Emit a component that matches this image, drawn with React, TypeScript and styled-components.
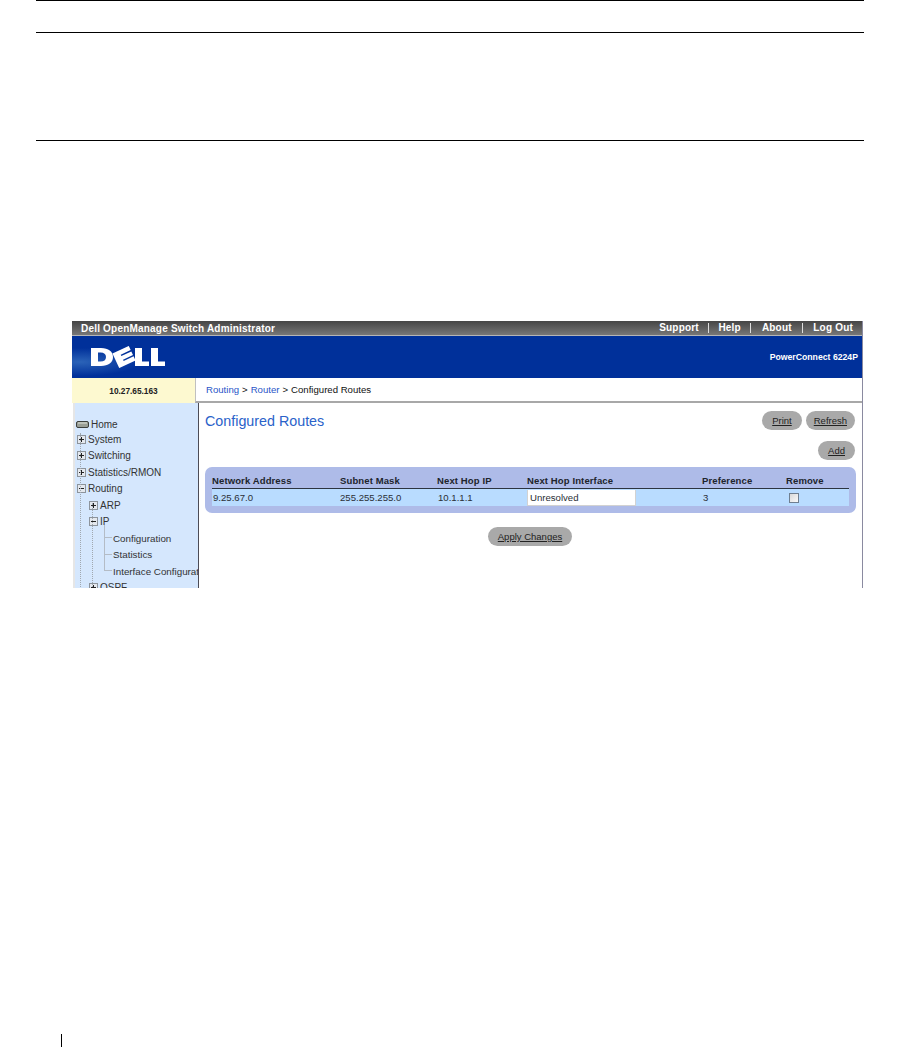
import React from "react";
import styled, { createGlobalStyle } from "styled-components";

const Global = createGlobalStyle`
html, body { margin: 0; padding: 0; background: #fff; }
body { font-family: "Liberation Sans", Arial, sans-serif; color: #222; }
`;

const Page = styled.div`
width: 900px;
height: 1048px;
overflow: hidden;
display: flex;
flex-direction: column;
`;
const Rule = styled.div<{ $gap: number }>`
height: 1px;
margin: ${(p) => p.$gap}px 36px 0;
background: #000;
`;
const Frame = styled.div`
width: 791px;
height: 267px;
margin: 180px 0 0 72px;
overflow: hidden;
flex: none;
box-sizing: border-box;
border-right: 1.5px solid #8a8aa0;
display: flex;
flex-direction: column;
`;
const TopBar = styled.div`
height: 14px;
flex: none;
display: flex;
align-items: center;
justify-content: space-between;
padding: 0 9px 0 9px;
background: linear-gradient(#454545, #777);
border-bottom: 1px solid #b5b5b5;
color: #fff;
font-size: 10px;
font-weight: bold;
letter-spacing: 0.2px;
`;
const TopLinks = styled.div`
display: flex;
align-items: center;
height: 100%;
`;
const TopLink = styled.span<{ $pad: number; $last?: boolean }>`
padding: 0 ${(p) => (p.$last ? 0 : p.$pad)}px 0 ${(p) => p.$pad}px;
line-height: 10px;
border-right: ${(p) => (p.$last ? "none" : "1px solid #ddd")};
`;
const Banner = styled.div`
height: 42px;
flex: none;
display: flex;
align-items: center;
justify-content: space-between;
padding: 0 4px 0 19px;
background:
  radial-gradient(ellipse 60px 14px at 8px 26px, #2b63b8 0%, rgba(43, 99, 184, 0) 100%),
  #00309a;
`;
const Model = styled.span`
color: #fff;
font-size: 8.7px;
font-weight: bold;
`;
const AddressRow = styled.div`
height: 25px;
flex: none;
display: flex;
`;
const Address = styled.div`
width: 123px;
display: flex;
align-items: center;
justify-content: center;
background: #fdf9d0;
font-size: 8.3px;
font-weight: bold;
color: #222;
`;
const Crumbs = styled.div`
flex: 1;
display: flex;
align-items: center;
gap: 3px;
padding-left: 10px;
border-left: 1px solid #c0c0c0;
border-bottom: 2px solid #a8a8a8;
font-size: 9.6px;
color: #111;
`;
const Crumb = styled.span`
color: #2a55c8;
`;
const Body = styled.div`
flex: 1;
display: flex;
min-height: 0;
`;
const Sidebar = styled.div`
position: relative;
width: 126px;
flex: none;
box-sizing: border-box;
margin-left: 1px;
padding-top: 14px;
background: #d5e7fd;
border-left: 2px solid #e6e6e6;
border-right: 1.5px solid #4c4c56;
overflow: hidden;
font-size: 10px;
color: #333;
`;
const TreeRow = styled.div<{ $level: number }>`
height: 16.5px;
display: flex;
align-items: center;
gap: 2px;
white-space: nowrap;
padding-left: ${(p) => 2 + p.$level * 12}px;
`;
const TopRow = styled(TreeRow)`
height: 14px;
padding-left: 1px;
`;
const Leaf = styled(TreeRow)`
padding-left: 38px;
font-size: 9.8px;
`;
const Guide = styled.div<{ $x: number; $y: number; $h: number; $solid?: boolean }>`
position: absolute;
left: ${(p) => p.$x}px;
top: ${(p) => p.$y}px;
height: ${(p) => p.$h}px;
border-left: 1px ${(p) => (p.$solid ? "solid #b4bcc6" : "dotted #a0a8b0")};
`;
const Tick = styled.div<{ $x: number; $y: number }>`
position: absolute;
left: ${(p) => p.$x}px;
top: ${(p) => p.$y}px;
width: 8px;
border-top: 1px solid #b4bcc6;
`;
const Main = styled.div`
flex: 1;
padding: 8px 7px 0 6px;
display: flex;
flex-direction: column;
`;
const TitleRow = styled.div`
display: flex;
justify-content: space-between;
align-items: center;
height: 19px;
`;
const Title = styled.h1`
margin: 0;
font-size: 14.3px;
font-weight: normal;
color: #2a62c9;
`;
const Buttons = styled.div<{ $center?: boolean }>`
display: flex;
gap: 4px;
justify-content: ${(p) => (p.$center ? "center" : "flex-end")};
`;
const Pill = styled.span<{ $pad?: number }>`
height: 19px;
padding: 0 ${(p) => p.$pad ?? 10}px;
display: flex;
align-items: center;
border-radius: 10px;
background: #a9a9a9;
color: #222;
font-size: 9.5px;
text-decoration: underline;
`;
const AddRow = styled(Buttons)`
margin-top: 11px;
`;
const ApplyRow = styled(Buttons)`
margin-top: 14px;
`;
const Panel = styled.div`
margin-top: 7px;
height: 46px;
box-sizing: border-box;
padding: 7px 7px 0;
border-radius: 7px;
background: #aebbe8;
margin-right: -1px;
`;
const Grid = "128px 97px 90px 175px 84px 1fr";
const HeadRow = styled.div`
display: grid;
grid-template-columns: ${Grid};
height: 15px;
box-sizing: border-box;
padding-bottom: 1px;
align-items: center;
border-bottom: 1px solid #2d3440;
font-size: 9.5px;
font-weight: bold;
letter-spacing: 0.12px;
color: #20242c;
`;
const DataRow = styled.div`
display: grid;
grid-template-columns: ${Grid};
height: 17px;
align-items: center;
background: #b9dcff;
font-size: 9.6px;
color: #2b2f36;
`;
const Cell = styled.span<{ $flush?: boolean }>`
padding-left: ${(p) => (p.$flush ? 0 : 1)}px;
`;
const Interface = styled.div`
width: 109px;
height: 16px;
box-sizing: border-box;
padding-left: 2px;
display: flex;
align-items: center;
background: #fff;
border: 1px solid #d2d2d2;
border-width: 0 1px 1px 1px;
`;
const Check = styled.div`
width: 10px;
height: 10px;
margin-left: 3px;
box-sizing: border-box;
border: 1px solid #6f7f90;
background: linear-gradient(135deg, #d9d9d9, #fafafa);
`;
const Foot = styled.div`
width: 1px;
height: 13px;
flex: none;
margin: 446px 0 0 61px;
background: #000;
`;

function Logo() {
  return (
    <svg width="74" height="22" viewBox="0 0 74 22" fill="#fff">
      <path
        fillRule="evenodd"
        d="M0 2H10C17.5 2 22 5.5 22 11S17.5 20 10 20H0ZM7 6.5V15.5H9.5C13 15.5 15 14 15 11S13 6.5 9.5 6.5Z"
      />
      <path
        transform="rotate(-25 33 11)"
        d="M24 3H42V7.5H31V9H42V13H31V14.5H42V19H24Z"
      />
      <path d="M44 2H51V15.5H58V20H44Z" />
      <path d="M60 2H67V15.5H74V20H60Z" />
    </svg>
  );
}

function Toggle({ open }: { open?: boolean }) {
  return (
    <svg width="9" height="9" viewBox="0 0 9 9" style={{ flex: "none" }}>
      <rect x="0.5" y="0.5" width="8" height="8" fill="#e4e8ee" stroke="#8d949c" />
      <path d={open ? "M2 4.5H7" : "M2 4.5H7M4.5 2V7"} stroke="#222" fill="none" />
    </svg>
  );
}

function Drive() {
  return (
    <svg width="13" height="7" viewBox="0 0 13 7" style={{ flex: "none" }}>
      <rect x="0.5" y="0.5" width="12" height="6" rx="1.5" fill="#9a9f96" stroke="#3c3f3c" />
      <path d="M2 2H11" stroke="#dfe3da" />
    </svg>
  );
}

const columns = ["Network Address", "Subnet Mask", "Next Hop IP", "Next Hop Interface", "Preference", "Remove"];

export default function App() {
  return (
    <Page>
      <Global />
      <Rule $gap={0} />
      <Rule $gap={31} />
      <Rule $gap={107} />
      <Frame>
        <TopBar>
          <span>Dell OpenManage Switch Administrator</span>
          <TopLinks>
            <TopLink $pad={9}>Support</TopLink>
            <TopLink $pad={9.5}>Help</TopLink>
            <TopLink $pad={10.5}>About</TopLink>
            <TopLink $pad={10} $last>Log Out</TopLink>
          </TopLinks>
        </TopBar>
        <Banner>
          <Logo />
          <Model>PowerConnect 6224P</Model>
        </Banner>
        <AddressRow>
          <Address>10.27.65.163</Address>
          <Crumbs>
            <Crumb>Routing</Crumb> &gt; <Crumb>Router</Crumb> &gt; <span>Configured Routes</span>
          </Crumbs>
        </AddressRow>
        <Body>
          <Sidebar>
            <Guide $x={5} $y={30} $h={170} />
            <Guide $x={17} $y={100} $h={100} />
            <Guide $x={29} $y={122} $h={46} $solid />
            <Tick $x={29} $y={134} />
            <Tick $x={29} $y={151} />
            <Tick $x={29} $y={167} />
            <TopRow $level={0}>
              <Drive />
              Home
            </TopRow>
            <TreeRow $level={0}><Toggle />System</TreeRow>
            <TreeRow $level={0}><Toggle />Switching</TreeRow>
            <TreeRow $level={0}><Toggle />Statistics/RMON</TreeRow>
            <TreeRow $level={0}><Toggle open />Routing</TreeRow>
            <TreeRow $level={1}><Toggle />ARP</TreeRow>
            <TreeRow $level={1}><Toggle open />IP</TreeRow>
            <Leaf $level={2}>Configuration</Leaf>
            <Leaf $level={2}>Statistics</Leaf>
            <Leaf $level={2}>Interface Configuration</Leaf>
            <TreeRow $level={1}><Toggle />OSPF</TreeRow>
          </Sidebar>
          <Main>
            <TitleRow>
              <Title>Configured Routes</Title>
              <Buttons>
                <Pill>Print</Pill>
                <Pill $pad={8}>Refresh</Pill>
              </Buttons>
            </TitleRow>
            <AddRow>
              <Pill>Add</Pill>
            </AddRow>
            <Panel>
              <HeadRow>
                {columns.map((c) => (
                  <span key={c}>{c}</span>
                ))}
              </HeadRow>
              <DataRow>
                <Cell>9.25.67.0</Cell>
                <Cell $flush>255.255.255.0</Cell>
                <Cell>10.1.1.1</Cell>
                <Interface>Unresolved</Interface>
                <Cell>3</Cell>
                <Check />
              </DataRow>
            </Panel>
            <ApplyRow $center>
              <Pill>Apply Changes</Pill>
            </ApplyRow>
          </Main>
        </Body>
      </Frame>
      <Foot />
    </Page>
  );
}
